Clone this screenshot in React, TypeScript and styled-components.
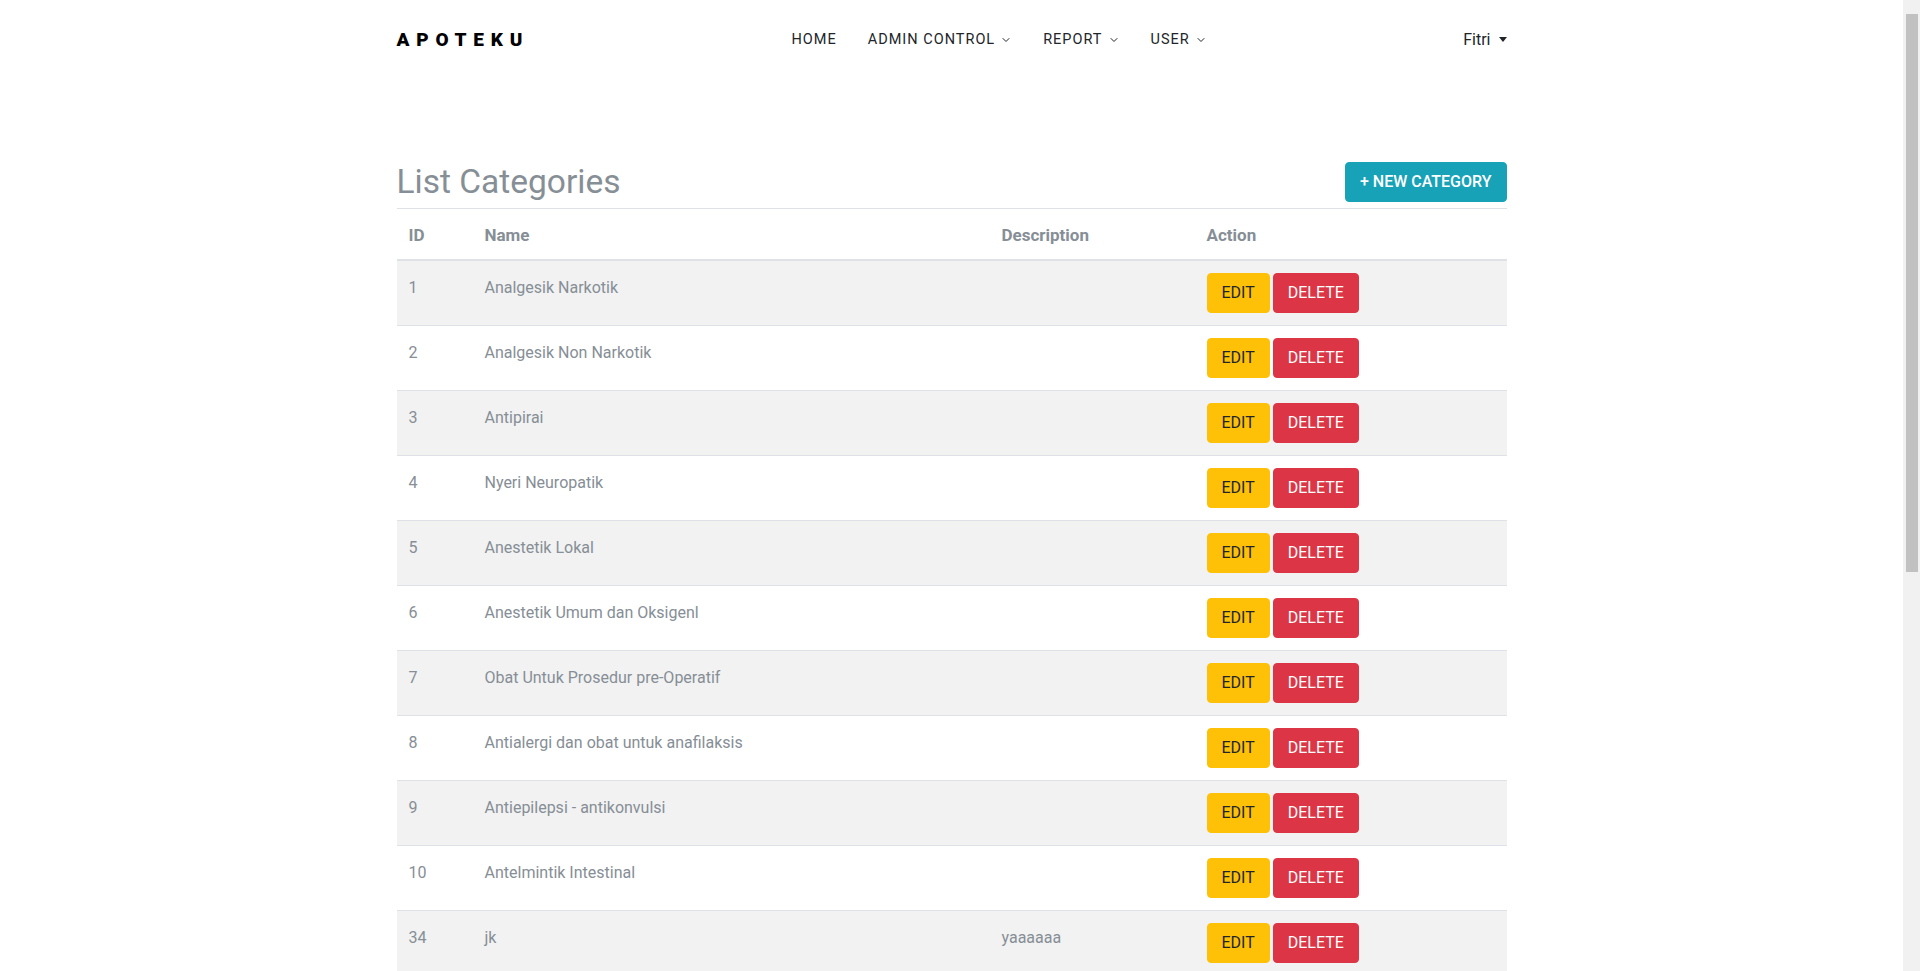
import React from "react";
import styled, {createGlobalStyle} from "styled-components";
import {ChevronDown} from "lucide-react";

type Category = {
  id: number;
  name: string;
  description: string;
};

const categories: Category[] = [
  {id: 1, name: "Analgesik Narkotik", description: ""},
  {id: 2, name: "Analgesik Non Narkotik", description: ""},
  {id: 3, name: "Antipirai", description: ""},
  {id: 4, name: "Nyeri Neuropatik", description: ""},
  {id: 5, name: "Anestetik Lokal", description: ""},
  {id: 6, name: "Anestetik Umum dan Oksigenl", description: ""},
  {id: 7, name: "Obat Untuk Prosedur pre-Operatif", description: ""},
  {id: 8, name: "Antialergi dan obat untuk anafilaksis", description: ""},
  {id: 9, name: "Antiepilepsi - antikonvulsi", description: ""},
  {id: 10, name: "Antelmintik Intestinal", description: ""},
  {id: 34, name: "jk", description: "yaaaaaa"},
];

const palette = {
  dark: "#212529",
  muted: "#868e96",
  border: "#dee2e6",
  stripe: "#f2f2f2",
  info: "#17a2b8",
  warning: "#ffc107",
  danger: "#dc3545",
};

const GlobalStyle = createGlobalStyle`
  * { box-sizing: border-box; }
  body {
    margin: 0;
    padding-right: 17px;
    background: #fff;
    font-family: Roboto, "Noto Sans", "Liberation Sans", sans-serif;
    color: ${palette.dark};
  }
`;

/* the reference shows the browser's scrollbar; drawn here since headless hides it */
const ScrollTrack = styled.div`
  position: fixed;
  top: 0;
  right: 0;
  width: 17px;
  height: 100vh;
  background: #f1f1f1;
  display: flex;
  flex-direction: column;
  align-items: center;
  padding-top: 14px;
`;

const ScrollThumb = styled.div`
  width: 12px;
  height: 558px;
  background: #c1c1c1;
`;

const Container = styled.div`
  width: 1140px;
  margin: 0 auto;
  padding: 0 15px;
`;

const Navbar = styled.nav`
  height: 78px;
`;

const NavInner = styled(Container)`
  height: 100%;
  display: flex;
  align-items: center;
`;

const Brand = styled.div`
  width: 380px;
  font-size: 19px;
  font-weight: 900;
  letter-spacing: 6.8px;
  color: #000;
`;

const NavMenu = styled.ul`
  display: flex;
  list-style: none;
  margin: 0;
  padding: 0;
`;

const NavItem = styled.li`
  display: flex;
  align-items: center;
  gap: 5px;
  padding: 0 16px 0 15px;
  font-size: 14.5px;
  letter-spacing: 1px;
  white-space: nowrap;
  color: ${palette.dark};

  svg {
    margin-top: 1px;
  }
`;

const UserMenu = styled.div`
  flex: 1;
  display: flex;
  justify-content: flex-end;
  align-items: center;
  gap: 6px;
  font-size: 16px;
  color: ${palette.dark};

  &::after {
    content: "";
    border-top: 5px solid ${palette.dark};
    border-left: 4px solid transparent;
    border-right: 4px solid transparent;
    margin-left: 2px;
  }
`;

const Main = styled(Container)`
  padding-top: 84px;
  padding-bottom: 660px;
`;

const PageHeader = styled.div`
  display: flex;
  align-items: center;
  justify-content: space-between;
  margin-bottom: 6px;
`;

const Title = styled.h2`
  margin: 0;
  font-size: 33.5px;
  font-weight: 400;
  line-height: 1.2;
  color: ${palette.muted};
`;

const Button = styled.button<{$variant: "info" | "warning" | "danger"}>`
  display: inline-block;
  border: 1px solid ${({$variant}) => palette[$variant]};
  background: ${({$variant}) => palette[$variant]};
  color: ${({$variant}) => ($variant === "warning" ? palette.dark : "#fff")};
  font-family: inherit;
  font-size: 16px;
  line-height: 24px;
  padding: 7px 14px;
  border-radius: 4px;
  text-transform: uppercase;
  cursor: pointer;
`;

const NewButton = styled(Button)`
  font-weight: 500;
  padding: 6px 14px;
  height: 40px;
`;

const Table = styled.table`
  width: 100%;
  border-collapse: collapse;
`;

const HeadCell = styled.th<{$width: number}>`
  width: ${({$width}) => $width}px;
  text-align: left;
  padding: 14px 12px 12px;
  font-size: 17px;
  font-weight: 700;
  line-height: 24px;
  color: ${palette.muted};
  border-top: 1px solid ${palette.border};
  border-bottom: 2px solid ${palette.border};
`;

const Row = styled.tr`
  &:nth-child(odd) {
    background: ${palette.stripe};
  }
`;

const Cell = styled.td`
  vertical-align: top;
  padding: 15px 12px 12px;
  font-size: 16px;
  line-height: 24px;
  color: ${palette.muted};
  border-top: 1px solid ${palette.border};
`;

const ActionCell = styled(Cell)`
  padding: 12px;

  button + button {
    margin-left: 3px;
  }
`;

const App: React.FC = () => {
  return (
    <>
      <GlobalStyle />
      <Navbar>
        <NavInner>
          <Brand>APOTEKU</Brand>
          <NavMenu>
            <NavItem>HOME</NavItem>
            <NavItem>
              ADMIN CONTROL <ChevronDown size={12} strokeWidth={2} />
            </NavItem>
            <NavItem>
              REPORT <ChevronDown size={12} strokeWidth={2} />
            </NavItem>
            <NavItem>
              USER <ChevronDown size={12} strokeWidth={2} />
            </NavItem>
          </NavMenu>
          <UserMenu>Fitri</UserMenu>
        </NavInner>
      </Navbar>
      <Main>
        <PageHeader>
          <Title>List Categories</Title>
          <NewButton $variant="info">+ New Category</NewButton>
        </PageHeader>
        <Table>
          <thead>
            <tr>
              <HeadCell $width={76}>ID</HeadCell>
              <HeadCell $width={517}>Name</HeadCell>
              <HeadCell $width={205}>Description</HeadCell>
              <HeadCell $width={312}>Action</HeadCell>
            </tr>
          </thead>
          <tbody>
            {categories.map((category) => (
              <Row key={category.id}>
                <Cell>{category.id}</Cell>
                <Cell>{category.name}</Cell>
                <Cell>{category.description}</Cell>
                <ActionCell>
                  <Button $variant="warning">Edit</Button>
                  <Button $variant="danger">Delete</Button>
                </ActionCell>
              </Row>
            ))}
          </tbody>
        </Table>
      </Main>
      <ScrollTrack>
        <ScrollThumb />
      </ScrollTrack>
    </>
  );
};

export default App;
